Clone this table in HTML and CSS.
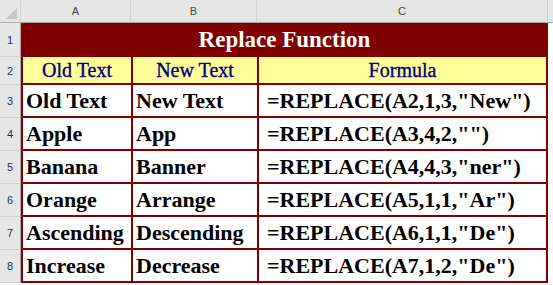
FILE: index.html
```html
<!DOCTYPE html>
<html>
<head>
<meta charset="utf-8">
<link rel="stylesheet" href="styles.css">
</head>
<body>
<div class="sheet">
  <div class="row colhead">
    <div class="corner"><svg width="21" height="22" viewBox="0 0 21 22"><polygon points="17,8 17,19 6,19" fill="#c4c4c4"/></svg></div>
    <div class="ch">A</div>
    <div class="ch">B</div>
    <div class="ch">C</div>
    <div class="ch rest"></div>
  </div>
  <div class="row r-title">
    <div class="rh">1</div>
    <div class="title">Replace Function</div>
  </div>
  <div class="row r-head">
    <div class="rh">2</div>
    <div class="cell hd">Old Text</div>
    <div class="cell hd">New Text</div>
    <div class="cell hd last">Formula</div>
  </div>
  <div class="row r-data">
    <div class="rh">3</div>
    <div class="cell">Old Text</div>
    <div class="cell">New Text</div>
    <div class="cell last f">=REPLACE(A2,1,3,"New")</div>
  </div>
  <div class="row r-data">
    <div class="rh">4</div>
    <div class="cell">Apple</div>
    <div class="cell">App</div>
    <div class="cell last f">=REPLACE(A3,4,2,"")</div>
  </div>
  <div class="row r-data">
    <div class="rh">5</div>
    <div class="cell">Banana</div>
    <div class="cell">Banner</div>
    <div class="cell last f">=REPLACE(A4,4,3,"ner")</div>
  </div>
  <div class="row r-data">
    <div class="rh">6</div>
    <div class="cell">Orange</div>
    <div class="cell">Arrange</div>
    <div class="cell last f">=REPLACE(A5,1,1,"Ar")</div>
  </div>
  <div class="row r-data">
    <div class="rh">7</div>
    <div class="cell">Ascending</div>
    <div class="cell">Descending</div>
    <div class="cell last f">=REPLACE(A6,1,1,"De")</div>
  </div>
  <div class="row r-data">
    <div class="rh">8</div>
    <div class="cell">Increase</div>
    <div class="cell">Decrease</div>
    <div class="cell last f">=REPLACE(A7,1,2,"De")</div>
  </div>
</div>
</body>
</html>
```
FILE: styles.css
```css
html, body {
  margin: 0;
  padding: 0;
  background: #ffffff;
}
.sheet {
  width: 553px;
  height: 285px;
  overflow: hidden;
}
.row {
  display: grid;
  grid-template-columns: 21px 110px 126px 291px 1fr;
}
.colhead {
  height: 23px;
  background: #e6e6e6;
  box-sizing: border-box;
  border-bottom: 1px solid #ababab;
}
.corner {
  border-right: 1px solid #d4d4d4;
  box-sizing: border-box;
  height: 22px;
}
.corner svg {
  display: block;
}
.ch {
  font-family: "Liberation Sans", Arial, sans-serif;
  font-size: 11px;
  color: #444444;
  text-align: center;
  line-height: 22px;
  border-right: 1px solid #d0d0d0;
}
.ch.rest {
  border-right: none;
}
.rh {
  background: #e6e6e6;
  box-sizing: border-box;
  border-right: 1px solid #ababab;
  border-bottom: 1px solid #d0d0d0;
  font-family: "Liberation Sans", Arial, sans-serif;
  font-size: 11px;
  color: #2a2f4a;
  text-align: center;
  display: flex;
  align-items: center;
  justify-content: center;
}
.r-title {
  height: 34px;
}
.title {
  grid-column: 2 / 5;
  background: #800000;
  color: #ffffff;
  font-family: "Liberation Serif", "Times New Roman", serif;
  font-weight: bold;
  font-size: 23px;
  line-height: 34px;
  text-align: center;
}
.cell {
  box-sizing: border-box;
  border-left: 2px solid #800000;
  border-bottom: 2px solid #800000;
  font-family: "Liberation Serif", "Times New Roman", serif;
  white-space: nowrap;
  overflow: hidden;
}
.cell.last {
  border-right: 2px solid #800000;
}
.r-head {
  height: 28px;
}
.hd {
  background: #ffff99;
  color: #000080;
  font-size: 20px;
  line-height: 26px;
  text-align: center;
  -webkit-text-stroke: 0.35px #000080;
}
.r-data {
  height: 33px;
}
.r-data .cell {
  font-size: 22px;
  font-weight: bold;
  color: #000000;
  line-height: 31px;
  padding-left: 3px;
}
.r-data .cell.f {
  padding-left: 8px;
}
```
